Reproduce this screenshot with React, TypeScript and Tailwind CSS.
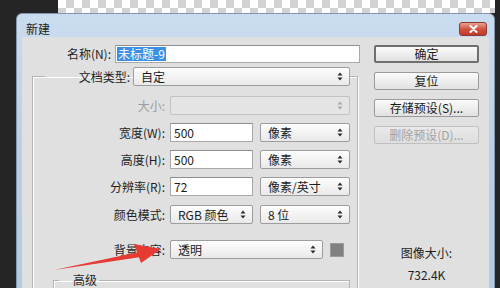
import React from 'react'

const Arrows = ({ disabled = false }: { disabled?: boolean }) => (
  <svg width="6" height="9" viewBox="0 0 6 9" className="shrink-0">
    <path d="M3 0.5 L5.5 3.5 L0.5 3.5 Z M3 8.5 L5.5 5.5 L0.5 5.5 Z" fill={disabled ? '#a8a8a8' : '#2a2a2a'} />
  </svg>
)

function Select({ value, w, disabled = false }: { value?: string; w: string; disabled?: boolean }) {
  return (
    <div
      className={`${w} h-[19px] flex items-center justify-between pl-[7px] pr-[6px] rounded-[2px] border ${
        disabled
          ? 'border-[#c2c2c2] bg-[#e4e4e4]'
          : 'border-[#9d9d9d] bg-gradient-to-b from-[#fdfdfd] to-[#e9e9e9]'
      }`}
    >
      <span className="text-[#1b1b1b] leading-none">{value}</span>
      <Arrows disabled={disabled} />
    </div>
  )
}

function Input({ value, w }: { value: string; w: string }) {
  return (
    <div className={`${w} h-[19px] flex items-center px-[3px] bg-white border border-[#a9a9a9] border-t-[#8e8e8e]`}>
      <span className="leading-none text-[#1b1b1b]">{value}</span>
    </div>
  )
}

function Row({ label, children, muted = false, top }: { label: string; children: React.ReactNode; muted?: boolean; top: string }) {
  return (
    <div className={`flex items-center h-[19px] ${top}`}>
      <div className={`w-[132px] text-right ${muted ? 'text-[#9c9c9c]' : 'text-[#1e1e1e]'}`}>{label}</div>
      <div className="flex items-center ml-[5px]">{children}</div>
    </div>
  )
}

function Button({ label, primary = false, disabled = false }: { label: string; primary?: boolean; disabled?: boolean }) {
  return (
    <div
      className={`w-[105px] h-[18px] flex items-center justify-center rounded-[2px] bg-gradient-to-b ${
        disabled
          ? 'border border-[#c0c0c0] from-[#e9e9e9] to-[#dedede] text-[#a2a2a2]'
          : primary
          ? 'border-2 border-[#6f6f6f] from-[#fbfbfb] to-[#e1e1e1] text-[#1b1b1b]'
          : 'border border-[#9a9a9a] from-[#fbfbfb] to-[#e1e1e1] text-[#1b1b1b]'
      }`}
    >
      {label}
    </div>
  )
}

export default function App() {
  return (
    <div className="relative w-[500px] h-[288px] overflow-hidden bg-[#252525] font-['Noto_Sans_CJK_SC',sans-serif] text-[12px]">
      {/* canvas behind the dialog */}
      <div className="flex h-[13px]">
        <div className="w-[58px]" />
        <div className="w-[437px] bg-[image:repeating-conic-gradient(#d2d2d2_0_25%,#ffffff_0_50%)] bg-[length:16px_16px]" />
      </div>

      {/* dialog */}
      <div className="ml-[16px] w-[479px] h-[276px] flex flex-col rounded-t-[6px] border border-[#8497ad] bg-gradient-to-b from-[#cadcef] via-[#b9cfe7] to-[#b2cae4]">
        <div className="h-[26px] flex items-start pt-[7px] pl-[9px] pr-[7px]">
          <span className="leading-[16px] text-[#1b1b1b]">新建</span>
          <div className="ml-auto mt-[1px] w-[28px] h-[14px] rounded-[3px] border border-[#8a3a32] bg-gradient-to-b from-[#e9a192] via-[#d2533f] to-[#c0392b] flex items-center justify-center">
            <svg width="9" height="8" viewBox="0 0 9 8">
              <path d="M1.5 1 L7.5 7 M7.5 1 L1.5 7" stroke="#ffffff" strokeWidth="2" strokeLinecap="round" />
            </svg>
          </div>
        </div>

        <div className="flex-1 mx-[5px] bg-[#e0e0e0] flex">
          {/* left column */}
          <div className="w-[343px] pt-[8px]">
            <div className="flex items-center h-[18px]">
              <div className="w-[89px] text-right text-[#1e1e1e]">名称(N):</div>
              <div className="ml-[4px] w-[245px] h-[18px] flex items-center px-[1px] bg-white border border-[#a9a9a9] border-t-[#8e8e8e]">
                <span className="bg-[#3b8fe4] text-white px-[1px] leading-[14px]">未标题-9</span>
              </div>
            </div>

            <fieldset className="mt-[4px] ml-[10px] w-[326px] h-[230px] border border-[#b4b4b4] shadow-[inset_1px_1px_0_#ffffff,1px_1px_0_#ffffff]">
              <legend className="ml-[12px] flex items-center h-[19px]">
                <span className="w-[85px] text-right text-[#1e1e1e]">文档类型:</span>
                <div className="ml-[3px]">
                  <Select value="自定" w="w-[217px]" />
                </div>
              </legend>

              <Row label="大小:" muted top="mt-[10px]">
                <Select w="w-[180px]" disabled />
              </Row>
              <Row label="宽度(W):" top="mt-[8px]">
                <Input value="500" w="w-[83px]" />
                <div className="ml-[7px]">
                  <Select value="像素" w="w-[90px]" />
                </div>
              </Row>
              <Row label="高度(H):" top="mt-[8px]">
                <Input value="500" w="w-[83px]" />
                <div className="ml-[7px]">
                  <Select value="像素" w="w-[90px]" />
                </div>
              </Row>
              <Row label="分辨率(R):" top="mt-[8px]">
                <Input value="72" w="w-[83px]" />
                <div className="ml-[7px]">
                  <Select value="像素/英寸" w="w-[90px]" />
                </div>
              </Row>
              <Row label="颜色模式:" top="mt-[9px]">
                <Select value="RGB 颜色" w="w-[83px]" />
                <div className="ml-[7px]">
                  <Select value="8 位" w="w-[90px]" />
                </div>
              </Row>
              <Row label="背景内容:" top="mt-[16px]">
                <Select value="透明" w="w-[153px]" />
                <div className="ml-[7px] w-[14px] h-[14px] bg-[#808080] border border-[#9a9a9a]" />
              </Row>

              <fieldset className="mt-[13px] ml-[20px] w-[297px] h-[40px] border border-[#b4b4b4] shadow-[inset_1px_1px_0_#ffffff]">
                <legend className="ml-[5px] pl-[14px] pr-[2px] leading-[16px] text-[#1e1e1e]">高级</legend>
              </fieldset>
            </fieldset>
          </div>

          {/* right column */}
          <div className="flex-1 pl-[9px] pt-[8px] flex flex-col">
            <div className="flex flex-col gap-[9px]">
              <Button label="确定" primary />
              <Button label="复位" />
              <Button label="存储预设(S)..." />
              <Button label="删除预设(D)..." disabled />
            </div>
            <div className="w-[105px] mt-[101px] text-center text-[#1e1e1e] leading-[16px]">图像大小:</div>
            <div className="w-[105px] mt-[6px] text-center text-[#1e1e1e] leading-[16px]">732.4K</div>
          </div>
        </div>
      </div>

      {/* red annotation arrow */}
      <svg className="absolute left-0 top-0 pointer-events-none" width="500" height="288" viewBox="0 0 500 288">
        <path d="M54 270 L139 252 L141 257 Z" fill="#e63b33" />
        <path d="M161 249 L134 244 L141 263 Z" fill="#e63b33" />
      </svg>
    </div>
  )
}
